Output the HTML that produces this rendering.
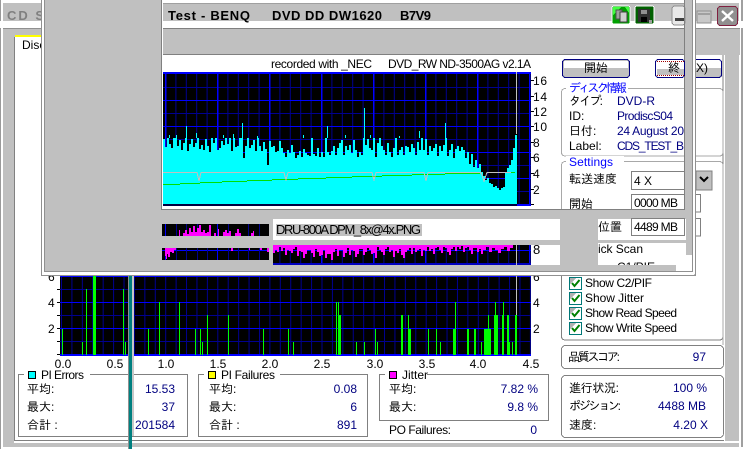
<!DOCTYPE html>
<html><head><meta charset="utf-8"><style>
html,body{margin:0;padding:0;background:#c0c0c0;width:743px;height:449px;overflow:hidden}
svg{display:block;position:absolute;left:0;top:0}
text{font-family:"Liberation Sans","IPAGothic","Noto Sans CJK JP",sans-serif;font-size:12px;fill:#000}
.n{fill:#000080}.b{fill:#0000ff}.e{text-anchor:end}.m{text-anchor:middle}
.t{font-weight:bold;font-size:13px}
.l{font-size:13px}
</style></head><body>
<svg width="743" height="449" viewBox="0 0 743 449" shape-rendering="crispEdges">
<defs>
<pattern id="g2" x="61" y="0" width="10.42" height="449" patternUnits="userSpaceOnUse"><rect width="1" height="449" fill="#000090"/></pattern>
<pattern id="g1" x="165" y="0" width="10.4" height="449" patternUnits="userSpaceOnUse"><rect width="1" height="449" fill="#000090"/></pattern>
<pattern id="g1b" x="165" y="0" width="52" height="449" patternUnits="userSpaceOnUse"><rect width="1.4" height="449" fill="#0000ff"/></pattern>
<clipPath id="c1"><rect x="617" y="258" width="60" height="7"/></clipPath>
<clipPath id="c2"><rect x="163" y="72" width="300" height="66"/></clipPath>
<g id="grid1">
<rect x="163" y="72" width="368" height="134" fill="url(#g1)"/>
<g fill="#000090"><rect x="163" y="87" width="368" height="1"/><rect x="163" y="113" width="368" height="1"/><rect x="163" y="139" width="368" height="1"/><rect x="163" y="165" width="368" height="1"/><rect x="163" y="191" width="368" height="1"/></g>
<rect x="163" y="72" width="368" height="134" fill="url(#g1b)"/>
<g fill="#0000ff"><rect x="163" y="72" width="368" height="2"/><rect x="163" y="100" width="368" height="1"/><rect x="163" y="126" width="368" height="1"/><rect x="163" y="152" width="368" height="1"/><rect x="163" y="178" width="368" height="1"/></g>
</g>
</defs>
<!-- main window -->
<rect width="743" height="449" fill="#c0c0c0"/>
<rect x="0" y="0" width="743" height="3" fill="#fff"/>
<rect x="0" y="0" width="1" height="449" fill="#9a9a9a"/>
<rect x="1" y="0" width="2" height="449" fill="#fff"/>
<rect x="741" y="0" width="2" height="449" fill="#a0a0a0"/>
<rect x="739" y="3" width="2" height="446" fill="#fff"/>
<rect x="1" y="447" width="742" height="2" fill="#fff"/>
<rect x="0" y="21" width="743" height="7" fill="#fff"/>
<rect x="3" y="28" width="737" height="1" fill="#909090"/>
<text x="7" y="20" class="t" style="fill:#808080;letter-spacing:2px">CD S</text>
<!-- tab -->
<rect x="14" y="37" width="710" height="403" fill="#fff"/>
<rect x="14" y="37" width="1" height="404" fill="#808080"/>
<rect x="14" y="440" width="710" height="1" fill="#808080"/>
<rect x="724" y="55" width="1" height="386" fill="#fff"/>
<rect x="15" y="35" width="27" height="2" fill="#ffff00"/>
<rect x="15" y="37" width="27" height="20" fill="#fff"/>
<text x="22" y="49">Disc</text>
<rect x="14" y="441" width="726" height="2" fill="#fff"/>

<!-- lower chart -->
<rect x="60" y="275" width="471" height="81" fill="#000"/>
<rect x="60" y="275" width="471" height="81" fill="url(#g2)"/>
<g fill="#000090"><rect x="60" y="289" width="471" height="1"/><rect x="60" y="315" width="471" height="1"/><rect x="60" y="341" width="471" height="1"/></g>
<g fill="#0000ff"><rect x="60" y="275" width="471" height="2"/><rect x="60" y="302" width="471" height="1"/><rect x="60" y="328" width="471" height="1"/><rect x="60" y="354" width="471" height="2"/></g>
<rect x="516" y="275" width="1" height="40" fill="#c0c0c0"/>
<g stroke="#00ff00" stroke-width="1" fill="none">
<path d="M62.5 355V329M82.5 355V342M86.5 355V289M123.5 355V289M125.5 355V342M148.5 355V329M159.5 355V302M179.5 355V302M195.5 355V329M200.5 355V329M202.5 355V342M207.5 355V315M228.5 355V315M263.5 355V329M288.5 355V329M293.5 355V342M336.5 355V302M338.5 355V302M356.5 355V342M364.5 355V342M375.5 355V329M377.5 355V342M408.5 355V315M428.5 355V329M436.5 355V329M440.5 355V342M455.5 355V302M474.5 355V329M475.5 355V342M481.5 355V342M488.5 355V315M495.5 355V302M503.5 355V302M509.5 355V342M512.5 355V342"/>
</g>
<g stroke="#00ff00" stroke-width="2" fill="none">
<path d="M340 355V315M402 355V315M410 355V329M454 355V329M468 355V329M475 355V329M485 355V329M487 355V329M490 355V329M495 355V315M497 355V315M503 355V315M508 355V315M516 355V315"/>
</g>
<rect x="93" y="275" width="3" height="80" fill="#00ff00"/>
<!-- axis -->
<g class="l"><text x="63" y="368" text-anchor="middle">0.0</text><text x="115" y="368" text-anchor="middle">0.5</text><text x="166" y="368" text-anchor="middle">1.0</text><text x="218" y="368" text-anchor="middle">1.5</text><text x="270" y="368" text-anchor="middle">2.0</text><text x="322" y="368" text-anchor="middle">2.5</text><text x="375" y="368" text-anchor="middle">3.0</text><text x="427" y="368" text-anchor="middle">3.5</text><text x="478" y="368" text-anchor="middle">4.0</text><text x="531" y="368" text-anchor="middle">4.5</text>
<text x="48" y="281">6</text><text x="48" y="307">4</text><text x="48" y="333">2</text><text x="533" y="281">6</text><text x="533" y="307">4</text><text x="533" y="333">2</text></g>
<g fill="#000"><rect x="57" y="302" width="3" height="1"/><rect x="57" y="328" width="3" height="1"/><rect x="57" y="354" width="3" height="1"/><rect x="57" y="315" width="3" height="1"/><rect x="57" y="341" width="3" height="1"/><rect x="57" y="289" width="3" height="1"/></g>

<!-- group boxes -->
<g fill="none" stroke="#808080" stroke-width="1">
<rect x="18.5" y="374.5" width="169" height="62"/>
<rect x="198.5" y="374.5" width="169" height="62"/>
<rect x="379.5" y="374.5" width="169" height="46"/>
<rect x="561.5" y="345.5" width="162" height="23" rx="4"/>
<rect x="561.5" y="375.5" width="162" height="62" rx="4"/>
<path d="M561.5 276V336q0 4 4 4H719q4 0 4-4V55"/>
</g>
<rect x="24" y="372" width="66" height="5" fill="#fff"/><rect x="204" y="372" width="76" height="5" fill="#fff"/><rect x="385" y="372" width="42" height="5" fill="#fff"/>
<rect x="28.5" y="371.5" width="7" height="7" fill="#00ffff" stroke="#000"/>
<rect x="208.5" y="371.5" width="7" height="7" fill="#ffff00" stroke="#000"/>
<rect x="389.5" y="371.5" width="7" height="7" fill="#ff00ff" stroke="#000"/>
<text x="41" y="379" textLength="43">PI Errors</text><text x="221" y="379" textLength="54">PI Failures</text><text x="402" y="379" textLength="26">Jitter</text>
<text x="27" y="393">平均:</text><text x="27" y="411">最大:</text><text x="27" y="429">合計 :</text>
<text x="175" y="393" class="n e">15.53</text><text x="175" y="411" class="n e">37</text><text x="175" y="429" class="n e">201584</text>
<text x="209" y="393">平均:</text><text x="209" y="411">最大:</text><text x="209" y="429">合計 :</text>
<text x="357" y="393" class="n e">0.08</text><text x="357" y="411" class="n e">6</text><text x="357" y="429" class="n e">891</text>
<text x="389" y="393">平均:</text><text x="389" y="411">最大:</text>
<text x="538" y="393" class="n e">7.82 %</text><text x="538" y="411" class="n e">9.8 %</text>
<text x="389" y="434" textLength="62">PO Failures:</text><text x="537" y="434" class="n e">0</text>

<!-- checks -->
<g>
<g id="ck"><rect x="569.5" y="277.5" width="12" height="12" fill="#fff" stroke="#007878"/><path d="M570 278h6l-6 6z" fill="#b0b0b0"/><path d="M572 283l2.500 3 5-6" fill="none" stroke="#008000" stroke-width="2" shape-rendering="auto"/></g>
<use href="#ck" y="15"/><use href="#ck" y="30"/><use href="#ck" y="45"/>
</g>
<text x="585" y="287" textLength="67">Show C2/PIF</text><text x="585" y="302" textLength="59">Show Jitter</text><text x="585" y="317" textLength="92">Show Read Speed</text><text x="585" y="332" textLength="92">Show Write Speed</text>
<text x="568" y="361" textLength="52">品質スコア:</text><text x="706" y="361" class="n e">97</text>
<text x="569" y="392" textLength="50">進行状況:</text><text x="569" y="410" textLength="52">ポジション:</text><text x="569" y="429">速度:</text>
<text x="707" y="392" class="n e">100 %</text><text x="706" y="410" class="n e">4488 MB</text><text x="708" y="429" class="n e">4.20 X</text>

<!-- teal window edge -->
<rect x="128" y="276" width="1" height="173" fill="#909090"/>
<rect x="129" y="276" width="3" height="173" fill="#008080"/>
<rect x="132" y="276" width="2" height="160" fill="#c8c8c8"/>
<rect x="132" y="441" width="2" height="2" fill="#fff"/>

<!-- right stub of right panel under overlay -->
<rect x="696" y="3" width="43" height="18" fill="#c0c0c0"/>
<rect x="696" y="29" width="44" height="26" fill="#c0c0c0"/>
<rect x="697" y="11" width="14" height="12" fill="#c8c8c8" stroke="#909090"/>
<rect x="698" y="13" width="12" height="2" fill="#a0a0a0"/>
<rect x="717.500" y="6.500" width="20" height="19" rx="3" fill="#909090" stroke="#802040"/>
<path d="M722 11l11 10M733 11l-11 10" stroke="#fff" stroke-width="2.400" fill="none" shape-rendering="auto"/>

<!-- right of strip -->
<rect x="696" y="59" width="26" height="18" fill="#c0c0c0"/>
<rect x="696" y="59" width="26" height="9" fill="#fff"/>
<rect x="655.500" y="59.500" width="66" height="18" rx="3" fill="none" stroke="#000080"/>
<text x="696" y="72">X)</text>
<path d="M696 88.500H719q4 0 4 4V152q0 4-4 4H696M696 161.500H719q4 0 4 4V345" fill="none" stroke="#a8a8a8"/>
<rect x="696" y="171" width="16" height="19" fill="#c0c0c0" stroke="#808080"/>
<path d="M700 177l4 4 4-4" fill="none" stroke="#000" stroke-width="2" shape-rendering="auto"/>
<path d="M696 194.500H700.500V212H696M696 218.500H700.500V236H696" fill="none" stroke="#808080"/>

<!-- overlay window -->
<rect x="41" y="0" width="655" height="276" fill="#c0c0c0"/>
<rect x="41" y="0" width="1" height="276" fill="#909090"/>
<rect x="42" y="0" width="2" height="274" fill="#fff"/>
<rect x="44" y="0" width="1" height="272" fill="#909090"/>
<rect x="41" y="275" width="655" height="1" fill="#909090"/>
<rect x="42" y="272" width="652" height="3" fill="#fff"/>
<rect x="44" y="271" width="649" height="1" fill="#909090"/>
<rect x="695" y="0" width="1" height="276" fill="#909090"/>
<rect x="693" y="0" width="2" height="274" fill="#fff"/>
<rect x="692" y="0" width="1" height="272" fill="#909090"/>

<!-- inner window -->
<rect x="161" y="0" width="1" height="210" fill="#808080"/>
<rect x="162" y="0" width="1" height="209" fill="#fff"/>
<rect x="163" y="0" width="522" height="3" fill="#fff"/>
<rect x="163" y="3" width="522" height="1" fill="#a0a0a0"/>
<rect x="163" y="21" width="522" height="7" fill="#fff"/>
<rect x="163" y="28" width="522" height="1" fill="#808080"/>
<text x="168" y="20" class="t" textLength="82">Test - BENQ</text>
<text x="272" y="20" class="t" textLength="110">DVD DD DW1620</text>
<text x="400" y="20" class="t" textLength="31">B7V9</text>
<rect x="612" y="6" width="18" height="18" rx="2" fill="#00a000" stroke="#fff"/>
<path d="M613 7h8l-8 8z" fill="#40ff40"/><path d="M625 7h4v6z" fill="#40ff40"/>
<rect x="616" y="10" width="6" height="9" fill="#a0a0a0" stroke="#505050"/><rect x="620" y="12" width="7" height="10" fill="#d0d0d0" stroke="#404040"/>
<rect x="635" y="6" width="19" height="18" rx="2" fill="#006000" stroke="#fff"/>
<rect x="638" y="9" width="12" height="13" fill="#303030"/><rect x="641" y="10" width="6" height="4" fill="#909090"/><rect x="641" y="17" width="6" height="5" fill="#000"/><rect x="649" y="20" width="3" height="3" fill="#a0a0a0"/>
<rect x="672" y="6" width="13" height="19" rx="3" fill="#e8e8e8" stroke="#909090"/>
<rect x="675" y="18" width="9" height="3" fill="#404040"/>
<rect x="163" y="54" width="522" height="1" fill="#808080"/>
<rect x="163" y="55" width="521" height="154" fill="#fff"/>
<rect x="161" y="209" width="524" height="1" fill="#808080"/>
<rect x="684" y="0" width="1" height="210" fill="#808080"/>
<text x="271" y="68" textLength="101">recorded with _NEC</text>
<text x="388" y="68" textLength="143">DVD_RW ND-3500AG v2.1A</text>

<!-- top chart -->
<rect x="163" y="72" width="368" height="134" fill="#000"/>
<use href="#grid1"/>
<path fill="#00ffff" d="M163 205V139h2V147h2V135h2V144h2V148h2V138h2V135h2V146h2V140h2V150h2V143h2V126h2V151h2V144h2V139h2V147h2V143h2V133h2V149h2V145h2V150h2V139h2V146h2V152h2V137h2V143h2V135h2V150h2V148h2V141h2V145h2V135h2V144h2V138h2V151h2V134h2V147h2V146h2V136h2V123h2V158h2V146h2V136h2V148h2V145h2V140h2V151h2V136h2V146h2V151h2V142h2V149h2V165h2V141h2V147h2V146h2V152h2V151h2V141h2V148h2V153h2V157h2V150h2V153h2V145h2V152h2V158h2V155h2V151h2V157h2V149h2V153h2V155h2V156h2V135h2V154h2V156h2V148h2V157h2V152h2V157h2V126h2V152h2V155h2V151h2V146h2V155h2V148h2V143h2V140h2V155h2V146h2V150h2V145h2V153h2V140h2V150h2V157h2V152h2V155h2V108h2V145h2V139h2V148h2V150h2V135h2V157h2V143h2V137h2V146h2V150h2V155h2V143h2V152h2V157h2V148h2V136h2V155h2V150h2V147h2V155h2V146h2V147h2V152h2V144h2V148h2V155h2V142h2V150h2V131h2V150h2V139h2V155h2V146h2V151h2V148h2V144h2V156h2V146h2V151h2V145h2V123h2V156h2V150h2V144h2V158h2V149h2V146h2V151h2V147h2V150h2V158h2V152h2V164h2V154h2V167h2V160h2V168h2V164h2V172h2V176h2V180h2V178h2V183h2V184h2V187h2V186h2V188h2V190h2V188h2V187h2V172h2V168h2V165h2V160h2V148h2V135h2V205z"/>
<rect x="163" y="72" width="300" height="66" fill="#000"/>
<use href="#grid1" clip-path="url(#c2)"/>
<path fill="#00ffff" d="M186 138V126h1V138zM242 138V123h1V138zM327 138V126h1V138zM364 138V108h1V138zM445 138V123h1V138zM419 138V131h1V138zM233 138V134h1V138zM196 138V133h1V138zM176 138V135h1V138zM169 138V135h1V138zM223 138V135h1V138zM257 138V136h1V138zM303 138V135h1V138zM370 138V135h1V138zM399 138V136h1V138zM345 138V135h1V138z"/>
<rect x="163" y="204" width="368" height="2" fill="#000040"/>
<rect x="517" y="204" width="14" height="2" fill="#0000ff"/>
<g fill="#00e000">
<rect x="163" y="184" width="17" height="1"/><rect x="180" y="183" width="20" height="1"/><rect x="200" y="182" width="22" height="1"/><rect x="222" y="181" width="25" height="1"/><rect x="247" y="180" width="25" height="1"/><rect x="272" y="179" width="26" height="1"/><rect x="298" y="178" width="28" height="1"/><rect x="326" y="177" width="26" height="1"/><rect x="352" y="176" width="30" height="1"/><rect x="382" y="175" width="30" height="1"/><rect x="412" y="174" width="33" height="1"/><rect x="445" y="173" width="35" height="1"/><rect x="498" y="172" width="17" height="1"/>
</g>
<path d="M163 172.500H197L199 181L201 172.500H284L286 180L288 172.500H372L374 180L376 172.500H424L426 181L428 172.500H481L484 181L487 172.500H511" fill="none" stroke="#c0c0c0" stroke-width="1"/>
<rect x="516" y="72" width="1" height="62" fill="#c0c0c0"/>
<rect x="531" y="72" width="3" height="135" fill="#fff"/>
<g fill="#000"><rect x="531" y="80" width="3" height="1"/><rect x="531" y="96" width="3" height="1"/><rect x="531" y="111" width="3" height="1"/><rect x="531" y="126" width="3" height="1"/><rect x="531" y="142" width="3" height="1"/><rect x="531" y="157" width="3" height="1"/><rect x="531" y="173" width="3" height="1"/><rect x="531" y="189" width="3" height="1"/><rect x="531" y="204" width="3" height="1"/></g>
<g class="l" style="font-size:13px"><text x="533" y="85" textLength="14">16</text><text x="533" y="101" textLength="14">14</text><text x="533" y="116" textLength="14">12</text><text x="533" y="131" textLength="14">10</text><text x="533" y="147">8</text><text x="533" y="162">6</text><text x="533" y="178">4</text><text x="533" y="194">2</text></g>

<!-- buttons -->
<rect x="562.500" y="59.500" width="67" height="18" rx="3" fill="#c0c0c0" stroke="#000080"/>
<rect x="564" y="61" width="64" height="7" fill="#fff"/>
<text x="584" y="72" textLength="24">開始</text>
<rect x="655.500" y="59.500" width="29" height="18" rx="3" fill="#fff" stroke="#000080"/>
<rect x="657" y="69" width="27" height="6" fill="#c0c0c0"/>
<path d="M657 61.500H684M657 75.500H684" stroke="#a00000" stroke-width="1" stroke-dasharray="1 1" fill="none"/>
<text x="668" y="72">終</text>

<!-- disc info -->
<path d="M684 88.500H565.500q-4 0-4 4V152q0 4 4 4H684M684 161.500H565.500q-4 0-4 4V209" fill="none" stroke="#a8a8a8"/>
<rect x="566" y="82" width="62" height="10" fill="#fff"/>
<rect x="566" y="156" width="58" height="10" fill="#fff"/>
<text x="569" y="92" class="b" textLength="58">ディスク情報</text>
<text x="569" y="166" class="b" textLength="44">Settings</text>
<text x="569" y="105" textLength="34">タイプ:</text><text x="569" y="120">ID:</text><text x="569" y="135">日付:</text><text x="569" y="150">Label:</text>
<text x="617" y="105" class="n" textLength="38">DVD-R</text><text x="617" y="120" class="n" textLength="56">ProdiscS04</text><text x="617" y="135" class="n" textLength="67">24 August 20</text><text x="617" y="150" class="n" textLength="67">CDS_TEST_B</text>
<text x="569" y="183" textLength="48">転送速度</text>
<rect x="631.500" y="171.500" width="53" height="18" fill="#fff" stroke="#808080"/>
<text x="634" y="185">4 X</text>
<rect x="631.500" y="194.500" width="53" height="16" fill="#fff" stroke="#808080"/>
<text x="634" y="207" textLength="44">0000 MB</text>
<text x="569" y="208">開始</text>
<rect x="563" y="209" width="122" height="1" fill="#808080"/>
<rect x="163" y="210" width="522" height="61" fill="#c0c0c0"/>
<rect x="631" y="210" width="54" height="8" fill="#c0c0c0"/>

<!-- thumbnails row -->
<rect x="162" y="224" width="107" height="12" fill="#000"/>
<g fill="#000090"><rect x="176" y="224" width="1" height="12"/><rect x="186" y="224" width="1" height="12"/><rect x="197" y="224" width="1" height="12"/><rect x="228" y="224" width="1" height="12"/><rect x="248" y="224" width="1" height="12"/><rect x="259" y="224" width="1" height="12"/></g>
<rect x="165" y="224" width="1" height="12" fill="#0000ff"/><rect x="217" y="224" width="1" height="12" fill="#0000ff"/>
<path fill="#ff00ff" d="M179 236V230h1V236h3V233h2V230h2V234h2V228h2V232h2V226h2V232h2V228h2V225h2V232h2V230h2V233h2V232h2V225h2V236h3V233h2V236h2V229h1V236h4V232h2V230h2V233h2V231h2V236h4V233h2V229h2V233h2V236h10V233h2V231h1V236z"/>
<rect x="162" y="248" width="107" height="12" fill="#000"/>
<rect x="162" y="250" width="107" height="1" fill="#0000ff"/>
<g fill="#000090"><rect x="176" y="248" width="1" height="12"/><rect x="186" y="248" width="1" height="12"/><rect x="197" y="248" width="1" height="12"/><rect x="207" y="248" width="1" height="12"/><rect x="228" y="248" width="1" height="12"/><rect x="238" y="248" width="1" height="12"/><rect x="248" y="248" width="1" height="12"/><rect x="259" y="248" width="1" height="12"/></g>
<rect x="165" y="248" width="1" height="12" fill="#0000ff"/><rect x="217" y="248" width="1" height="12" fill="#0000ff"/>
<path fill="#ff00ff" d="M165 248V256h1V259h1V254h1V257h2V252h2V253h2V250h2V248zM231 248h2v3h-2zM249 248h1v2h-1zM260 248h2v2h-2zM267 248h2v4h-2z"/>

<rect x="273" y="219" width="287" height="21" fill="#fff"/>
<rect x="276" y="224" width="146" height="12" fill="#c0c0c0"/>
<text x="276" y="234" style="font-size:13px" textLength="145">DRU-800A DPM_8x@4x.PNG</text>

<rect x="273" y="245" width="258" height="20" fill="#000"/>
<rect x="273" y="245" width="258" height="20" fill="url(#g1)"/>
<rect x="273" y="245" width="258" height="20" fill="url(#g1b)"/>
<rect x="273" y="250" width="258" height="1" fill="#0000ff"/>
<rect x="273" y="263" width="258" height="2" fill="#0000c0"/>
<path fill="#ff00ff" d="M273 245V253h2V250h2V252h2V247h2V251h2V248h2V255h2V250h2V251h2V253h2V249h2V247h2V256h2V251h2V252h2V258h2V254h2V250h2V250h2V253h2V257h2V249h2V252h2V256h2V255h2V250h2V258h2V254h2V254h2V260h2V252h2V249h2V256h2V250h2V250h2V257h2V253h2V248h2V255h2V250h2V251h2V257h2V254h2V249h2V249h2V255h2V252h2V248h2V250h2V254h2V253h2V258h2V247h2V250h2V252h2V255h2V249h2V247h2V252h2V250h2V257h2V251h2V253h2V249h2V255h2V258h2V252h2V250h2V248h2V254h2V248h2V252h2V250h2V249h2V256h2V250h2V251h2V247h2V251h2V249h2V254h2V248h2V247h2V250h2V253h2V247h2V248h2V252h2V255h2V249h2V247h2V251h2V247h2V249h2V246h2V252h2V248h2V247h2V250h2V254h2V248h2V248h2V252h2V249h2V254h2V247h2V245z"/>
<path fill="#ff00ff" d="M483 245V250h3V247h3V252h3V248h3V250h3V253h3V249h3V247h3V251h3V248h3V245z"/>
<rect x="516" y="245" width="1" height="20" fill="#c0c0c0"/>
<rect x="531" y="245" width="29" height="20" fill="#fff"/>
<text x="533" y="254" style="font-size:13px">8</text>

<!-- right white fragments -->
<rect x="598" y="219" width="88" height="21" fill="#fff"/>
<rect x="631.500" y="218.500" width="53" height="17" fill="#fff" stroke="#808080"/>
<rect x="631" y="210" width="54" height="8" fill="#c0c0c0"/>
<text x="634" y="231" textLength="44">4489 MB</text>
<text x="598" y="231" textLength="24">位置</text>
<rect x="598" y="243" width="88" height="22" fill="#fff"/>
<rect x="676" y="265" width="16" height="6" fill="#fff"/>
<rect x="686" y="255" width="6" height="10" fill="#fff"/>
<text x="598" y="253" textLength="45">ick Scan</text>
<text x="617" y="271" clip-path="url(#c1)">C1/PIE</text>
</svg>
</body></html>
